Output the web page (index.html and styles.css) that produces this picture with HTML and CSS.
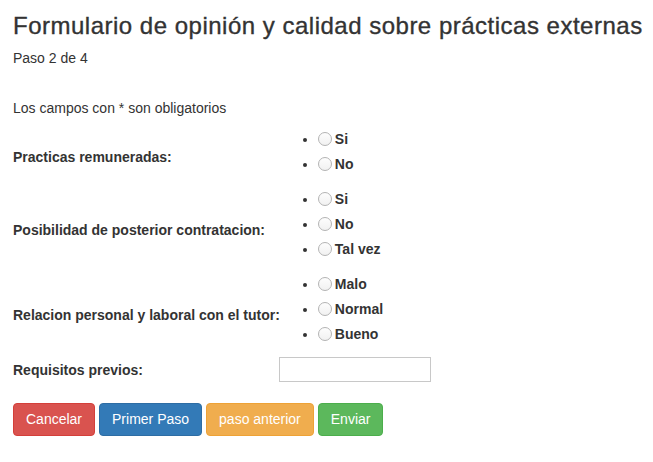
FILE: index.html
```html
<!DOCTYPE html>
<html lang="es">
<head>
<meta charset="utf-8">
<title>Formulario</title>
<link rel="stylesheet" href="styles.css">
</head>
<body>
<div class="page">
  <h3 class="title">Formulario de opinión y calidad sobre prácticas externas</h3>
  <p class="step">Paso 2 de 4</p>
  <p class="note">Los campos con * son obligatorios</p>
  <form>
    <table class="form-table">
      <tr>
        <td class="label-cell"><label>Practicas remuneradas:</label></td>
        <td>
          <ul class="options">
            <li><label><input type="radio" name="rem">Si</label></li>
            <li><label><input type="radio" name="rem">No</label></li>
          </ul>
        </td>
      </tr>
      <tr>
        <td class="label-cell"><label>Posibilidad de posterior contratacion:</label></td>
        <td>
          <ul class="options">
            <li><label><input type="radio" name="con">Si</label></li>
            <li><label><input type="radio" name="con">No</label></li>
            <li><label><input type="radio" name="con">Tal vez</label></li>
          </ul>
        </td>
      </tr>
      <tr>
        <td class="label-cell"><label>Relacion personal y laboral con el tutor:</label></td>
        <td>
          <ul class="options">
            <li><label><input type="radio" name="tut">Malo</label></li>
            <li><label><input type="radio" name="tut">Normal</label></li>
            <li><label><input type="radio" name="tut">Bueno</label></li>
          </ul>
        </td>
      </tr>
      <tr>
        <td class="label-cell"><label>Requisitos previos:</label></td>
        <td class="input-cell"><input type="text" class="text-input"></td>
      </tr>
    </table>
    <div class="actions">
      <button type="button" class="btn btn-danger">Cancelar</button>
      <button type="button" class="btn btn-primary">Primer Paso</button>
      <button type="button" class="btn btn-warning">paso anterior</button>
      <button type="button" class="btn btn-success">Enviar</button>
    </div>
  </form>
</div>
</body>
</html>
```
FILE: styles.css
```css
* { box-sizing: border-box; }
html, body { margin: 0; padding: 0; background: #fff; }
body {
  font-family: "Liberation Sans", Arial, sans-serif;
  font-size: 14px;
  line-height: 20px;
  color: #333;
}
.page { padding: 0 13px; }
.title {
  font-size: 24px;
  font-weight: normal;
  letter-spacing: 0.5px;
  line-height: 26px;
  margin: 13px 0 0;
  color: #333;
  white-space: nowrap;
  -webkit-text-stroke: 0.35px #333;
}
.step { margin: 9px 0 0; }
.note { margin: 30px 0 0; }
.form-table {
  border-collapse: collapse;
  border-spacing: 0;
  margin-top: 9px;
}
.form-table td {
  padding: 0;
  vertical-align: middle;
}
.label-cell {
  width: 266px;
  font-weight: bold;
  white-space: nowrap;
}
.options {
  margin: 0 0 10px;
  padding-left: 38px;
}
.options li {
  height: 25px;
  line-height: 25px;
}
.options label {
  font-weight: bold;
  white-space: nowrap;
}
.options input[type=radio] {
  appearance: none;
  -webkit-appearance: none;
  display: inline-block;
  width: 14px;
  height: 14px;
  margin: 0 3px 0 0;
  vertical-align: -2px;
  border: 1px solid #b4b4b4;
  border-radius: 50%;
  background: linear-gradient(#fdfdfd, #f1f1f1);
}
.input-cell { padding: 5px 0 2px; }
.text-input {
  display: block;
  width: 152px;
  height: 25px;
  border: 1px solid #c8c8c8;
  margin: 0 0 0 -1px;
  padding: 2px 4px;
}
.actions {
  margin-top: 21px;
  display: flex;
  gap: 4px;
}
.btn {
  font-family: "Liberation Sans", Arial, sans-serif;
  font-size: 14px;
  line-height: 19px;
  padding: 6px 12px;
  border: 1px solid transparent;
  border-radius: 4px;
  color: #fff;
  cursor: pointer;
}
.btn-danger { background: #d9534f; border-color: #d43f3a; }
.btn-primary { background: #337ab7; border-color: #2e6da4; }
.btn-warning { background: #f0ad4e; border-color: #eea236; }
.btn-success { background: #5cb85c; border-color: #4cae4c; }
```
